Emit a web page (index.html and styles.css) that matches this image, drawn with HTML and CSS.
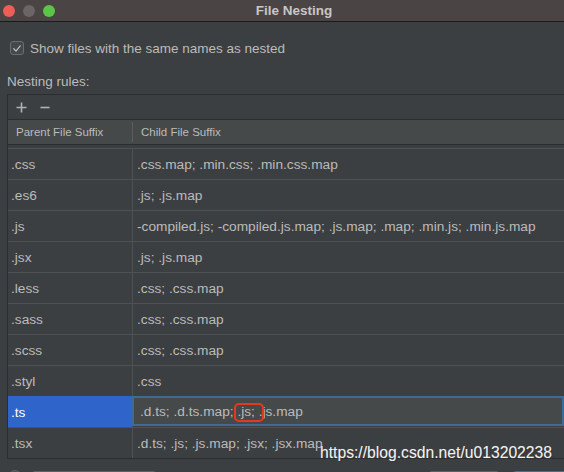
FILE: index.html
```html
<!DOCTYPE html>
<html>
<head>
<meta charset="utf-8">
<link rel="stylesheet" href="styles.css">
</head>
<body>
<div class="window">
  <div class="titlebar">
    <div class="lights">
      <span class="light red"></span>
      <span class="light gray"></span>
      <span class="light green"></span>
    </div>
    <div class="title">File Nesting</div>
  </div>
  <div class="content">
    <div class="option">
      <span class="checkbox">
        <svg width="13" height="13" viewBox="0 0 13 13"><path d="M3 6.8 L5.4 9.3 L10 3.6" fill="none" stroke="#b9bcbe" stroke-width="1.4" stroke-linecap="round" stroke-linejoin="round"/></svg>
      </span>
      <span class="option-text">Show files with the same names as nested</span>
    </div>
    <div class="section-label">Nesting rules:</div>
    <div class="panel">
      <div class="toolbar">
        <svg class="tool" width="11" height="11" viewBox="0 0 11 11"><path d="M5.5 0.5 V10.5 M0.5 5.5 H10.5" stroke="#afb1b3" stroke-width="1.6"/></svg>
        <svg class="tool" width="10" height="11" viewBox="0 0 10 11"><path d="M0.5 5.5 H9.5" stroke="#afb1b3" stroke-width="1.6"/></svg>
      </div>
      <div class="header">
        <div class="hcell hparent">Parent File Suffix</div>
        <div class="hcell hchild">Child File Suffix</div>
      </div>
      <div class="rows">
        <div class="row"><div class="cell parent">.css</div><div class="cell child">.css.map; .min.css; .min.css.map</div></div>
        <div class="row"><div class="cell parent">.es6</div><div class="cell child">.js; .js.map</div></div>
        <div class="row"><div class="cell parent">.js</div><div class="cell child">-compiled.js; -compiled.js.map; .js.map; .map; .min.js; .min.js.map</div></div>
        <div class="row"><div class="cell parent">.jsx</div><div class="cell child">.js; .js.map</div></div>
        <div class="row"><div class="cell parent">.less</div><div class="cell child">.css; .css.map</div></div>
        <div class="row"><div class="cell parent">.sass</div><div class="cell child">.css; .css.map</div></div>
        <div class="row"><div class="cell parent">.scss</div><div class="cell child">.css; .css.map</div></div>
        <div class="row"><div class="cell parent">.styl</div><div class="cell child">.css</div></div>
        <div class="row sel"><div class="cell parent">.ts</div><div class="cell child"><div class="edit">.d.ts; .d.ts.map; <span class="mark">.js;</span> .js.map</div></div></div>
        <div class="row last"><div class="cell parent">.tsx</div><div class="cell child">.d.ts; .js; .js.map; .jsx; .jsx.map</div></div>
      </div>
    </div>
    <div class="footer">
      <span class="help"></span>
      <span class="btn wide"></span>
      <span class="spacer"></span>
      <span class="btn cancel"></span>
      <span class="btn ok"></span>
    </div>
    <div class="watermark">https://blog.csdn.net/u013202238</div>
  </div>
</div>
</body>
</html>
```

FILE: styles.css
```css
html, body {
  margin: 0;
  padding: 0;
}
body {
  background: #3c3f41;
  font-family: "Liberation Sans", Arial, sans-serif;
  color: #bbbbbb;
  width: 564px;
  height: 472px;
  overflow: hidden;
}
.window {
  width: 564px;
  height: 472px;
  position: relative;
  overflow: hidden;
}
.titlebar {
  height: 21px;
  background: #4a4444;
  border-bottom: 1px solid #1a1a1a;
  position: relative;
  display: flex;
  align-items: center;
}
.lights {
  display: flex;
  gap: 8px;
  padding-left: 3px;
}
.light {
  width: 12px;
  height: 12px;
  border-radius: 50%;
  display: block;
}
.light.red { background: #ec5f57; }
.light.gray { background: #6b6565; }
.light.green { background: #5cc447; }
.title {
  position: absolute;
  left: 0;
  right: 0;
  top: 0;
  line-height: 21px;
  text-align: center;
  font-weight: bold;
  font-size: 13.5px;
  color: #cbc5c5;
  padding-left: 24px;
}
.content {
  position: relative;
  height: 450px;
  padding-top: 19px;
  box-sizing: border-box;
}
.option {
  display: flex;
  align-items: center;
  height: 14px;
  padding-left: 10px;
  gap: 6px;
}
.checkbox {
  width: 12px;
  height: 12px;
  border: 1px solid #6b6e70;
  border-radius: 3px;
  background: #43494a;
  display: flex;
  align-items: center;
  justify-content: center;
}
.checkbox svg { display: block; }
.option-text {
  font-size: 13.5px;
  color: #bbbbbb;
}
.section-label {
  font-size: 13.5px;
  padding-left: 7px;
  margin-top: 19px;
  height: 15px;
  line-height: 15px;
}
.panel {
  margin-top: 5px;
  margin-left: 7px;
  border-top: 1px solid #2b2d2f;
  border-left: 1px solid #2b2d2f;
  border-bottom: 1px solid #2b2d2f;
}
.toolbar {
  height: 24px;
  display: flex;
  align-items: center;
  gap: 13px;
  padding-left: 8px;
  border-bottom: 1px solid #2b2d2f;
}
.tool { display: block; }
.header {
  height: 24px;
  background: #45494a;
  border-bottom: 1px solid #2b2d2f;
  display: grid;
  grid-template-columns: 124px 1fr;
  align-items: center;
  font-size: 11.5px;
  margin-bottom: 3px;
}
.hcell {
  padding-left: 8px;
}
.hchild {
  border-left: 1px solid #5a5d5f;
  height: 20px;
  line-height: 20px;
}
.rows {
  display: flex;
  flex-direction: column;
}
.row {
  display: grid;
  grid-template-columns: 124px 1fr;
  height: 31px;
  font-size: 13.7px;
}
.cell {
  border-top: 1px solid #4f5254;
  height: 30px;
  line-height: 31px;
  white-space: nowrap;
}
.parent {
  padding-left: 3px;
}
.child {
  border-left: 1px solid #4f5254;
  padding-left: 4px;
}
.row.sel .parent {
  background: #2f65ca;
  border-top-color: #2f65ca;
  color: #ffffff;
  height: 31px;
}
.row.sel .child {
  border-top: none;
  height: 31px;
  padding-left: 0;
  border-left-color: #4f5254;
}
.edit {
  height: 26px;
  line-height: 28px;
  border: 2px solid #3e6a96;
  background: #45494a;
  padding-left: 6px;
  color: #bbbbbb;
  margin-left: -1px;
}
.mark {
  position: relative;
}
.mark::after {
  content: "";
  position: absolute;
  left: -3px;
  right: -9px;
  top: -1px;
  bottom: -3px;
  border: 2px solid #e5391f;
  border-radius: 5px;
}
.footer {
  display: flex;
  align-items: flex-start;
  padding-top: 11px;
  padding-left: 8px;
}
.help {
  width: 12px;
  height: 12px;
  border-radius: 50%;
  background: #4c5052;
  border: 1px solid #5e6163;
}
.btn {
  height: 20px;
  border-radius: 4px;
  background: #4c5052;
  border: 1px solid #5e6163;
}
.btn.wide {
  width: 124px;
  margin-left: 9px;
  margin-top: 1px;
}
.spacer { flex: 1; }
.btn.cancel {
  width: 70px;
  margin-top: 1px;
}
.btn.ok {
  width: 70px;
  margin-left: 12px;
  margin-right: -20px;
  margin-top: 1px;
  background: #365880;
  border-color: #4c708c;
}
.watermark {
  position: absolute;
  left: 320px;
  top: 422px;
  font-size: 15.7px;
  color: #f2f2f2;
  text-shadow: 0 0 1px #555, 1px 1px 1px #333;
  white-space: nowrap;
}
```
